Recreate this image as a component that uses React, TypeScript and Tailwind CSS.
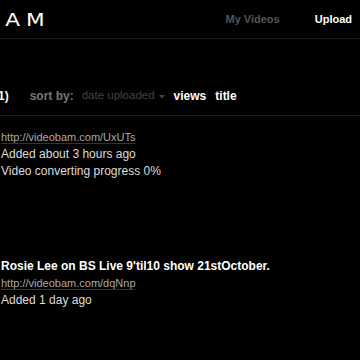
export default function App() {
  return (
    <div className="w-[360px] h-[360px] overflow-hidden bg-black text-white" style={{ fontFamily: '"Liberation Sans", Arial, sans-serif' }}>
      <div className="h-[39px] border-b border-[#1c1c1c] flex items-center justify-between pr-[8px]">
        <div
          className="-ml-[114px] origin-left scale-x-[1.2] text-[18px] tracking-[5px] text-white whitespace-nowrap"
          style={{ fontFamily: '"DejaVu Sans", sans-serif' }}
        >
          VIDEOBAM
        </div>
        <div className="flex items-center gap-[35px] text-[11px] font-bold">
          <a className="text-[#555]">My Videos</a>
          <a className="text-white">Upload</a>
        </div>
      </div>

      <div className="h-[76px] flex items-center pt-[38px] text-[12px] font-bold whitespace-nowrap">
        <span className="text-white -ml-[6px]">(1)</span>
        <span className="ml-[21px] text-[#777]">sort by:</span>
        <span className="ml-[8px] text-[#444] font-normal text-[11.5px]">date uploaded</span>
        <svg className="ml-[4px] mt-[1px]" width="6" height="4" viewBox="0 0 6 4">
          <path d="M0 0h6L3 3.5z" fill="#444" />
        </svg>
        <span className="ml-[9px] text-white">views</span>
        <span className="ml-[9px] text-white">title</span>
      </div>
      <div className="border-t border-[#1e1e1e] h-0" />

      <div className="pt-[13px] pl-[1px] text-[12px] leading-[17px]">
        <a className="block text-[#aaa] text-[11px] underline decoration-[#333] underline-offset-2">http://videobam.com/UxUTs</a>
        <div className="text-[#ddd]">Added about 3 hours ago</div>
        <div className="text-[#ddd]">Video converting progress 0%</div>
      </div>

      <div className="pt-[78px] pl-[1px] text-[12px] leading-[17px]">
        <div className="font-bold text-white">Rosie Lee on BS Live 9'til10 show 21stOctober.</div>
        <a className="block text-[#aaa] text-[11px] underline decoration-[#333] underline-offset-2">http://videobam.com/dqNnp</a>
        <div className="text-[#ddd]">Added 1 day ago</div>
      </div>
    </div>
  );
}
